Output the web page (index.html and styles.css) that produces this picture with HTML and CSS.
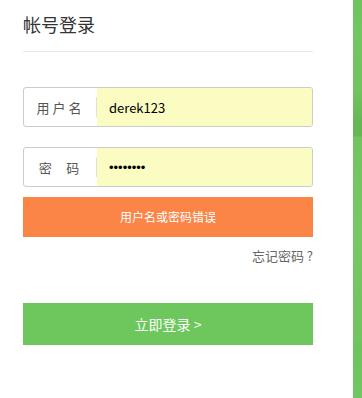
FILE: index.html
```html
<!DOCTYPE html>
<html lang="zh-CN">
<head>
  <meta charset="UTF-8" />
  <title>帐号登录</title>
  <link rel="stylesheet" href="styles.css">
</head>
<body>
  <div class="page">
    <div class="panel">
      <h1 class="title">帐号登录</h1>

      <div class="field">
        <span class="field-label">用 户 名</span>
        <input class="field-input" type="text" value="derek123" />
      </div>

      <div class="field field-pwd">
        <span class="field-label">密&nbsp;&nbsp;&nbsp;&nbsp;&nbsp;码</span>
        <input class="field-input" type="password" value="derek123" />
      </div>

      <div class="error">用户名或密码错误</div>

      <div class="forgot">忘记密码 ?</div>

      <button class="submit">立即登录 &gt;</button>
    </div>
    <div class="side"></div>
  </div>
</body>
</html>
```

FILE: styles.css
```css
html, body {
  margin: 0;
  height: 100%;
  font-family: "Noto Sans CJK SC", "Microsoft YaHei", sans-serif;
}
.page {
  display: flex;
  height: 100%;
  background: #fff;
}
.panel {
  width: 290px;
  padding: 0 40px 0 23px;
}
.side {
  width: 9px;
  background: linear-gradient(to bottom,
    #6fc25e 0, #74c563 30px, #72c460 90px, #66b655 123px, #66b655 136px,
    #72c460 137px, #78c866 230px, #72c460 340px, #6fc25e 345px, #74c563 398px);
}
.title {
  margin: 0;
  padding-top: 12px;
  height: 39px;
  font-size: 18px;
  font-weight: normal;
  line-height: 25px;
  color: #333;
  border-bottom: 1px solid #e8e8e8;
}
.field {
  display: flex;
  margin-top: 35px;
  height: 38px;
  border: 1px solid #ccc;
  border-radius: 3px;
  overflow: hidden;
}
.field-pwd {
  margin-top: 20px;
}
.field-label {
  width: 73px;
  flex: none;
  display: flex;
  align-items: center;
  justify-content: center;
  font-size: 13px;
  color: #555;
  position: relative;
  padding-right: 3px;
  box-sizing: border-box;
  white-space: pre;
}
.field-label::after {
  content: "";
  position: absolute;
  right: 0;
  top: 9px;
  bottom: 9px;
  border-right: 1px solid #e0e0e0;
}
.field-input {
  flex: 1;
  min-width: 0;
  border: none;
  outline: none;
  background: #fafcc1;
  padding: 0 0 0 12px;
  font-family: "Noto Sans CJK SC", sans-serif;
  font-size: 13px;
  color: #000;
}
.field-pwd .field-input {
  font-family: "Liberation Sans", sans-serif;
}
.error {
  margin-top: 10px;
  height: 40px;
  line-height: 40px;
  background: #fb8546;
  color: #fff;
  font-size: 12px;
  text-align: center;
}
.forgot {
  margin-top: 10px;
  text-align: right;
  font-size: 13px;
  color: #666;
  line-height: 18px;
}
.submit {
  display: block;
  width: 100%;
  margin-top: 38px;
  height: 42px;
  border: none;
  background: #6dc75c;
  color: #fff;
  font-family: "Noto Sans CJK SC", sans-serif;
  font-size: 14px;
  cursor: pointer;
}
```
